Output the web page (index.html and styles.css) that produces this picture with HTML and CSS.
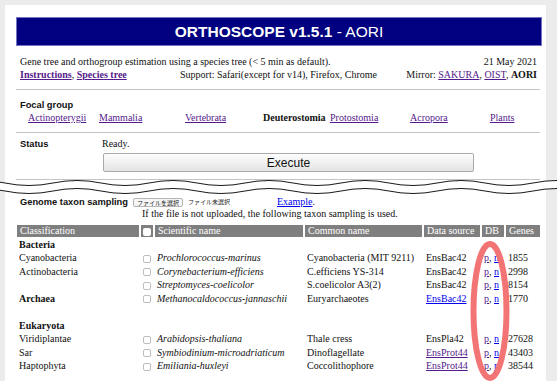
FILE: index.html
```html
<!DOCTYPE html>
<html lang="en">
<head>
    <meta charset="UTF-8">
    <meta name="viewport" content="width=device-width, initial-scale=1.0">
    <title>ORTHOSCOPE v1.5.1 - AORI</title>
    <link rel="stylesheet" href="styles.css">
</head>
<body>
    <div class="panel top-panel">
        <div class="banner"><b>ORTHOSCOPE v1.5.1</b> - AORI</div>

        <div class="info">
            <div class="info-row">
                <span>Gene tree and orthogroup estimation using a species tree (&lt; 5 min as default).</span>
                <span>21 May 2021</span>
            </div>
            <div class="info-row three">
                <span><a class="v strong" href="#">Instructions</a>, <a class="v strong" href="#">Species tree</a></span>
                <span>Support: Safari(except for v14), Firefox, Chrome</span>
                <span class="right">Mirror: <a class="v" href="#">SAKURA</a>, <a class="v" href="#">OIST</a>, <b>AORI</b></span>
            </div>
        </div>

        <hr>

        <h3 class="section-title focal-title">Focal group</h3>
        <div class="focal">
            <a class="v" href="#">Actinopterygii</a>
            <a class="v" href="#">Mammalia</a>
            <a class="v" href="#">Vertebrata</a>
            <b>Deuterostomia</b>
            <a class="v" href="#">Protostomia</a>
            <a class="v" href="#">Acropora</a>
            <a class="v" href="#">Plants</a>
        </div>

        <hr>

        <div class="status">
            <h3 class="section-title">Status</h3>
            <div>
                <div class="ready">Ready.</div>
                <button class="execute" type="button">Execute</button>
            </div>
        </div>

        <hr class="last">
    </div>

    <!-- cut mark: the page is shortened here -->
    <svg class="cut" width="557" height="20" viewBox="0 0 557 20">
        <path d="M-43,9 Q-19,4 5,9 T53,9 T101,9 T149,9 T197,9 T245,9 T293,9 T341,9 T389,9 T437,9 T485,9 T533,9 T581,9" fill="none" stroke="#fff" stroke-width="8"/>
        <path d="M-43,5 Q-19,0 5,5 T53,5 T101,5 T149,5 T197,5 T245,5 T293,5 T341,5 T389,5 T437,5 T485,5 T533,5 T581,5" fill="none" stroke="#1a1a1a" stroke-width="1"/>
        <path d="M-43,13 Q-19,8 5,13 T53,13 T101,13 T149,13 T197,13 T245,13 T293,13 T341,13 T389,13 T437,13 T485,13 T533,13 T581,13" fill="none" stroke="#1a1a1a" stroke-width="1"/>
    </svg>

    <div class="panel bottom-panel">
        <div class="upload">
            <h3 class="section-title">Genome taxon sampling</h3>
            <span class="file-btn">ファイルを選択</span>
            <span class="file-none">ファイル未選択</span>
            <a class="example" href="#">Example</a>.
        </div>
        <p class="note">If the file is not uploaded, the following taxon sampling is used.</p>

        <table class="taxa">
            <colgroup>
                <col class="c-class">
                <col class="c-check">
                <col class="c-sci">
                <col class="c-common">
                <col class="c-source">
                <col class="c-db">
                <col class="c-genes">
            </colgroup>
            <tr>
                <th>Classification</th>
                <th class="check"><span class="head-box"></span></th>
                <th>Scientific name</th>
                <th>Common name</th>
                <th>Data source</th>
                <th>DB</th>
                <th>Genes</th>
            </tr>
            <tr>
                <td><b>Bacteria</b></td>
                <td></td><td></td><td></td><td></td><td></td><td></td>
            </tr>
            <tr>
                <td class="sub">Cyanobacteria</td>
                <td class="check"><span class="box"></span></td>
                <td><i>Prochlorococcus-marinus</i></td>
                <td>Cyanobacteria (MIT 9211)</td>
                <td>EnsBac42</td>
                <td><a class="v" href="#">p</a>, <a href="#">n</a></td>
                <td>1855</td>
            </tr>
            <tr>
                <td class="sub">Actinobacteria</td>
                <td class="check"><span class="box"></span></td>
                <td><i>Corynebacterium-efficiens</i></td>
                <td>C.efficiens YS-314</td>
                <td>EnsBac42</td>
                <td><a class="v" href="#">p</a>, <a href="#">n</a></td>
                <td>2998</td>
            </tr>
            <tr>
                <td></td>
                <td class="check"><span class="box"></span></td>
                <td><i>Streptomyces-coelicolor</i></td>
                <td>S.coelicolor A3(2)</td>
                <td>EnsBac42</td>
                <td><a class="v" href="#">p</a>, <a href="#">n</a></td>
                <td>8154</td>
            </tr>
            <tr>
                <td><b>Archaea</b></td>
                <td class="check"><span class="box"></span></td>
                <td><i>Methanocaldococcus-jannaschii</i></td>
                <td>Euryarchaeotes</td>
                <td><a href="#">EnsBac42</a></td>
                <td><a class="v" href="#">p</a>, <a href="#">n</a></td>
                <td>1770</td>
            </tr>
            <tr>
                <td>&nbsp;</td>
                <td></td><td></td><td></td><td></td><td></td><td></td>
            </tr>
            <tr>
                <td><b>Eukaryota</b></td>
                <td></td><td></td><td></td><td></td><td></td><td></td>
            </tr>
            <tr>
                <td>Viridiplantae</td>
                <td class="check"><span class="box"></span></td>
                <td><i>Arabidopsis-thaliana</i></td>
                <td>Thale cress</td>
                <td>EnsPla42</td>
                <td><a class="v" href="#">p</a>, <a href="#">n</a></td>
                <td>27628</td>
            </tr>
            <tr>
                <td>Sar</td>
                <td class="check"><span class="box"></span></td>
                <td><i>Symbiodinium-microadriaticum</i></td>
                <td>Dinoflagellate</td>
                <td><a class="v" href="#">EnsProt44</a></td>
                <td><a class="v" href="#">p</a>, <a href="#">n</a></td>
                <td>43403</td>
            </tr>
            <tr>
                <td>Haptophyta</td>
                <td class="check"><span class="box"></span></td>
                <td><i>Emiliania-huxleyi</i></td>
                <td>Coccolithophore</td>
                <td><a class="v" href="#">EnsProt44</a></td>
                <td><a class="v" href="#">p</a>, <a href="#">n</a></td>
                <td>38544</td>
            </tr>
        </table>
    </div>

    <!-- red annotation ring over the DB column -->
    <svg class="mark" width="50" height="141" viewBox="0 0 50 141">
        <ellipse cx="25" cy="71" rx="16.5" ry="67" fill="none" stroke="#f27474" stroke-width="6"/>
    </svg>
</body>
</html>
```

FILE: styles.css
```css
html, body {
    height: 381px;
    overflow: hidden;
}

body {
    margin: 0;
    padding-top: 5px;
    box-sizing: border-box;
    background-color: #ececec;
    font-family: 'Liberation Serif', 'Times New Roman', serif;
    font-size: 10px;
    color: #111;
    position: relative;
}

a {
    color: #0000ee;
}

a.v {
    color: #551a8b;
}

.strong {
    font-weight: bold;
}

.panel {
    background-color: #fff;
    margin: 0 11px 0 5px;
    padding: 0 4px 0 11px;
}

.top-panel {
    padding-top: 12px;
    padding-bottom: 10px;
}

.bottom-panel {
    margin-top: -12px;
    padding-top: 10px;
    height: 185px;
    overflow: hidden;
}

/* --- Banner --- */
.banner {
    background-color: #000080;
    border: 1px solid #7474c0;
    color: #fff;
    text-align: center;
    font-family: 'Liberation Sans', Arial, sans-serif;
    font-size: 15.5px;
    line-height: 27px;
}

.info {
    margin-top: 9px;
    padding: 0 5px 0 4px;
    line-height: 13px;
}

.info-row {
    display: flex;
    justify-content: space-between;
}

.info-row.three {
    display: grid;
    grid-template-columns: 1fr auto 1fr;
}

.right {
    text-align: right;
}

hr {
    border: 0;
    border-top: 1px solid #c4c4c4;
    height: 0;
    margin: 8px 2px 0 0;
}

hr.last {
    margin-top: 7px;
}

.section-title {
    margin: 0;
    font-family: 'Liberation Sans', Arial, sans-serif;
    font-size: 9.3px;
    font-weight: bold;
    line-height: 12px;
    color: #111;
}

/* --- Focal group --- */
.focal-title {
    margin-top: 9px;
    padding-left: 4px;
}

.focal {
    display: grid;
    grid-template-columns: 71px 86px 78px 67px 80px 80px auto;
    padding-left: 12px;
    line-height: 13px;
}

/* --- Status --- */
.status {
    display: grid;
    grid-template-columns: 83px 371px;
    margin-top: 5px;
    padding-left: 4px;
}

.ready {
    line-height: 12px;
    margin-left: -1px;
}

.execute {
    display: block;
    width: 371px;
    height: 19px;
    margin-top: 3px;
    padding: 0;
    border: 1px solid #aaa;
    border-radius: 2px;
    background: linear-gradient(#fdfdfd, #e4e4e4);
    font-family: 'Liberation Sans', Arial, sans-serif;
    font-size: 12px;
    color: #111;
}

/* --- Cut mark --- */
.cut {
    display: block;
    position: relative;
    z-index: 1;
    margin-top: -12px;
}

/* --- Taxon sampling --- */
.upload {
    display: flex;
    align-items: center;
    padding-left: 4px;
    line-height: 12px;
}

.file-btn {
    margin-left: 5px;
    padding: 0 3px;
    border: 1px solid #b4b4b4;
    border-radius: 2px;
    background-color: #f6f6f6;
    font-family: 'Noto Sans CJK JP', sans-serif;
    font-size: 6px;
    line-height: 7px;
    color: #222;
}

.file-none {
    margin-left: 5px;
    font-family: 'Noto Sans CJK JP', sans-serif;
    font-size: 6px;
    color: #222;
}

.example {
    margin-left: 47px;
}

.note {
    margin: 0;
    padding-left: 126px;
    line-height: 12px;
}

.taxa {
    border-collapse: separate;
    border-spacing: 2px;
    table-layout: fixed;
    width: 527px;
    margin: 3px 0 0 -1px;
    font-size: 10px;
    line-height: 11.5px;
}

.c-class { width: 122px; }
.c-check { width: 12px; }
.c-sci { width: 148px; }
.c-common { width: 117px; }
.c-source { width: 56px; }
.c-db { width: 22px; }
.c-genes { width: 34px; }

.taxa th {
    background-color: #7f7f7f;
    color: #fff;
    font-weight: normal;
    text-align: left;
    padding: 0 3px;
    white-space: nowrap;
}

.taxa td {
    padding: 0 2px;
    white-space: nowrap;
    vertical-align: middle;
}

.taxa td.sub {
    padding-left: 2px;
}

.taxa .check {
    padding: 0;
    text-align: center;
}

.head-box {
    display: inline-block;
    width: 8px;
    height: 8px;
    border-radius: 2px;
    background-color: #fff;
    vertical-align: middle;
}

.box {
    display: inline-block;
    width: 6px;
    height: 6px;
    border: 1px solid #bdbdbd;
    border-radius: 2px;
    background-color: #fff;
    vertical-align: middle;
}

/* --- Annotation --- */
.mark {
    position: absolute;
    left: 465px;
    top: 240px;
}
```
